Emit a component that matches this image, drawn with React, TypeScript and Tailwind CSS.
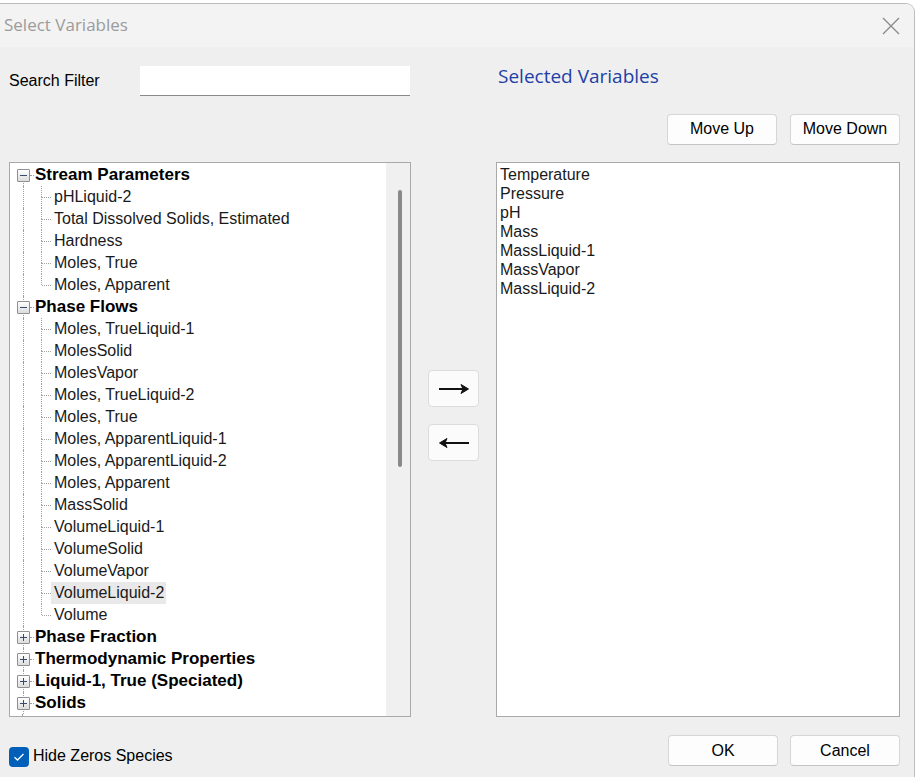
const font = { fontFamily: '"Liberation Sans", Arial, sans-serif' };

type Node = { label: string; children?: string[]; open?: boolean };

const tree: Node[] = [
  {
    label: "Stream Parameters",
    open: true,
    children: ["pHLiquid-2", "Total Dissolved Solids, Estimated", "Hardness", "Moles, True", "Moles, Apparent"],
  },
  {
    label: "Phase Flows",
    open: true,
    children: [
      "Moles, TrueLiquid-1",
      "MolesSolid",
      "MolesVapor",
      "Moles, TrueLiquid-2",
      "Moles, True",
      "Moles, ApparentLiquid-1",
      "Moles, ApparentLiquid-2",
      "Moles, Apparent",
      "MassSolid",
      "VolumeLiquid-1",
      "VolumeSolid",
      "VolumeVapor",
      "VolumeLiquid-2",
      "Volume",
    ],
  },
  { label: "Phase Fraction" },
  { label: "Thermodynamic Properties" },
  { label: "Liquid-1, True (Speciated)" },
  { label: "Solids" },
];

const selected = ["Temperature", "Pressure", "pH", "Mass", "MassLiquid-1", "MassVapor", "MassLiquid-2"];

function ExpandBox({ open, first }: { open?: boolean; first?: boolean }) {
  return (
    <div className="relative w-[13px] h-[22px] flex items-center">
      {/* root connector */}
      <div
        className={`absolute left-[6px] w-0 border-l border-dotted border-[#a0a0a0] ${
          first ? "top-[11px] bottom-0" : "top-0 bottom-0"
        }`}
      />
      <div className="relative w-[13px] h-[13px] border border-[#8e8f8f] rounded-[1px] bg-gradient-to-b from-white to-[#dcdcdc] flex items-center justify-center">
        <div className="absolute w-[7px] h-px bg-[#3b4a6b]" />
        {!open && <div className="absolute h-[7px] w-px bg-[#3b4a6b]" />}
      </div>
    </div>
  );
}

function TreeHeader({ node, first }: { node: Node; first?: boolean }) {
  return (
    <div className="flex h-[22px] items-center">
      <div className="w-[7px]" />
      <ExpandBox open={node.open} first={first} />
      <div className="w-[4px] h-0 border-t border-dotted border-[#a0a0a0]" />
      <span className="ml-[1px] text-[17px] font-bold text-black whitespace-nowrap" style={font}>
        {node.label}
      </span>
    </div>
  );
}

function TreeChild({ label, last, highlight }: { label: string; last?: boolean; highlight?: boolean }) {
  return (
    <div className="flex h-[22px] items-stretch">
      <div className="w-[14px] border-r border-dotted border-[#a0a0a0]" />
      <div className="w-[18px] flex flex-col">
        <div className="h-[11px] border-r border-dotted border-[#a0a0a0]" />
        <div className={`flex-1 ${last ? "" : "border-r border-dotted border-[#a0a0a0]"}`} />
      </div>
      <div className="w-[10px] flex items-center">
        <div className="w-[9px] h-0 border-t border-dotted border-[#a0a0a0]" />
      </div>
      <div className={`flex items-center pl-[3px] pr-[2px] -ml-[1px] ${highlight ? "bg-[#e9e9e9]" : ""}`}>
        <span className="text-[16px] text-[#1a1a1a] whitespace-nowrap" style={font}>
          {label}
        </span>
      </div>
    </div>
  );
}

function WinButton({ children, className = "" }: { children: React.ReactNode; className?: string }) {
  return (
    <button
      className={`h-[31px] w-[110px] bg-[#fdfdfd] border border-[#d6d6d6] border-b-[#c4c4c4] rounded-[4px] text-[16px] text-black flex items-center justify-center ${className}`}
      style={font}
    >
      {children}
    </button>
  );
}

function Arrow({ dir }: { dir: "right" | "left" }) {
  return (
    <svg width="32" height="12" viewBox="0 0 32 12">
      {dir === "right" ? (
        <>
          <path d="M1 6 H27" stroke="#111" strokeWidth="2" />
          <path d="M23 1.5 L30.5 6 L23 10.5 L25 6 Z" fill="#111" stroke="#111" strokeWidth="1" strokeLinejoin="round" />
        </>
      ) : (
        <>
          <path d="M5 6 H31" stroke="#111" strokeWidth="2" />
          <path d="M9 1.5 L1.5 6 L9 10.5 L7 6 Z" fill="#111" stroke="#111" strokeWidth="1" strokeLinejoin="round" />
        </>
      )}
    </svg>
  );
}

export default function App() {
  return (
    <div className="w-[915px] h-[777px] bg-white overflow-hidden pt-[3px]" style={font}>
      <div className="h-[774px] border-t border-r border-[#bcbcbc] rounded-tr-[9px] bg-[#efefef] flex flex-col overflow-hidden">
        {/* title bar */}
        <div className="h-[43px] bg-[#f3f3f3] flex items-center justify-between pl-[4px] pr-[14px] shrink-0">
          <span className="text-[17px] text-[#9b9b9b] -mt-[1px]" style={{ fontFamily: '"Open Sans", "Noto Sans", sans-serif' }}>
            Select Variables
          </span>
          <svg width="18" height="18" viewBox="0 0 18 18" className="mt-[1px]">
            <path d="M1 1 L17 17 M17 1 L1 17" stroke="#8a8a8a" strokeWidth="1.3" />
          </svg>
        </div>

        {/* body */}
        <div className="flex pl-[9px]">
          {/* left column */}
          <div className="w-[402px] flex flex-col">
            <div className="h-[115px] pt-[19px]">
              <div className="flex items-center h-[30px]">
                <span className="w-[131px] text-[16px] text-black">Search Filter</span>
                <div className="w-[270px] h-[30px] bg-white border-b border-[#8a8a8a]" />
              </div>
            </div>
            <div className="h-[555px] bg-white border border-[#a9a9a9] flex overflow-hidden">
              <div className="flex-1 flex flex-col pt-[1px]">
                {tree.map((n, i) => (
                  <div key={n.label}>
                    <TreeHeader node={n} first={i === 0} />
                    {n.open &&
                      n.children!.map((c, j) => (
                        <TreeChild
                          key={c + j}
                          label={c}
                          last={j === n.children!.length - 1}
                          highlight={c === "VolumeLiquid-2"}
                        />
                      ))}
                  </div>
                ))}
                <div className="flex-1 flex">
                  <div className="w-[13px] border-r border-dotted border-[#a0a0a0]" />
                </div>
              </div>
              <div className="w-[24px] bg-[#f0f0f0] pt-[27px] flex justify-center pl-[3px]">
                <div className="w-[4px] h-[277px] bg-[#898989] rounded-full" />
              </div>
            </div>
            <div className="mt-[28px] flex items-center">
              <div className="w-[20px] h-[20px] rounded-[4px] bg-[#005fb8] flex items-center justify-center">
                <svg width="12" height="10" viewBox="0 0 12 10">
                  <path d="M1.5 5.2 L4.5 8 L10.5 2" stroke="white" strokeWidth="1.3" fill="none" />
                </svg>
              </div>
              <span className="ml-[4px] text-[16px] text-black -mt-[1px]">Hide Zeros Species</span>
            </div>
          </div>

          {/* middle column */}
          <div className="w-[85px] flex flex-col items-start pl-[17px] pt-[323px] gap-[17px]">
            <button className="w-[51px] h-[37px] bg-[#fbfbfb] border border-[#dcdcdc] rounded-[4px] flex items-center justify-center">
              <Arrow dir="right" />
            </button>
            <button className="w-[51px] h-[37px] bg-[#fbfbfb] border border-[#dcdcdc] rounded-[4px] flex items-center justify-center">
              <Arrow dir="left" />
            </button>
          </div>

          {/* right column */}
          <div className="w-[404px] flex flex-col">
            <div className="h-[115px] flex flex-col">
              <div className="mt-[15px] ml-[2px] text-[19px] text-[#1e3fa6]" style={{ fontFamily: '"Open Sans", "Noto Sans", sans-serif' }}>
                Selected Variables
              </div>
              <div className="mt-[23px] flex justify-end gap-[13px]">
                <WinButton>Move Up</WinButton>
                <WinButton>Move Down</WinButton>
              </div>
            </div>
            <div className="h-[555px] bg-white border border-[#a9a9a9] pl-[3px] pt-[2px]">
              {selected.map((s) => (
                <div key={s} className="h-[19px] flex items-center text-[16px] text-[#1a1a1a]">
                  {s}
                </div>
              ))}
            </div>
            <div className="mt-[18px] flex justify-end gap-[12px]">
              <WinButton className="h-[30px]">OK</WinButton>
              <WinButton className="h-[30px]">Cancel</WinButton>
            </div>
          </div>
        </div>
      </div>
    </div>
  );
}
